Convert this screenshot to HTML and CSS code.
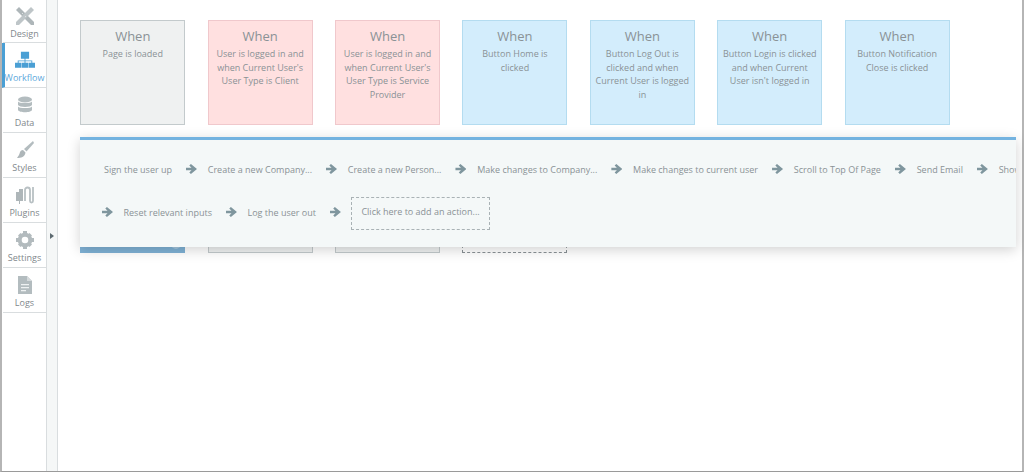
FILE: index.html
```html
<!DOCTYPE html>
<html lang="en">
  <head>
    <meta charset="UTF-8" />
    <title>Workflow</title>
    <link rel="stylesheet" href="styles.css">
  </head>
  <body>
    <div class="app">
      <nav class="sidebar">
        <a class="tab">
          <svg class="tab-icon" viewBox="0 0 20 20"><path d="M1 4 4 1l15 15v3h-3z" fill="#aeb6b9"/><path d="M19 4l-3-3L1 16l0 3h3z" fill="#bec5c8"/><path d="M7 8l1-1M10 11l1-1" stroke="#dfe3e4" stroke-width="1"/></svg>
          Design
        </a>
        <a class="tab active">
          <svg class="tab-icon" viewBox="0 0 22 20"><path d="M6.500 1h9v7.500h-9zM10.500 8.500h1v2h7.500V13h-1v-1.500h-6.500V13h-1v-1.500H4V13H3v-2.500h7.500zM0 13h7v5.500H0zM7.500 13h7v5.500h-7zM15 13h7v5.500h-7z" fill="#4a9fd4"/></svg>
          Workflow
        </a>
        <a class="tab">
          <svg class="tab-icon" viewBox="0 0 20 20"><ellipse cx="10" cy="4.500" rx="7" ry="3" fill="#b3bcbf"/><path d="M3 6.500c1 2 13 2 14 0v3.500c-1 2.500-13 2.500-14 0zM3 11.500c1 2 13 2 14 0V15c-1 3-13 3-14 0z" fill="#b3bcbf"/></svg>
          Data
        </a>
        <a class="tab">
          <svg class="tab-icon" viewBox="0 0 20 20"><path d="M18 1 9 9l2.500 2.500L19 3z" fill="#b3bcbf"/><path d="M8 10c-3 0-3 3-4 5l-2 3c4 0 8-1 8.500-5.500z" fill="#aeb6b9"/></svg>
          Styles
        </a>
        <a class="tab">
          <svg class="tab-icon" viewBox="0 0 20 20"><path d="M1 7h3V4h4v12H5v3H4v-3H1z" fill="#aeb6b9"/><path d="M10 16V5a2.500 2.500 0 0 1 5 0v11a1.500 1.500 0 0 0 3 0V2" fill="none" stroke="#b9c1c4" stroke-width="1.800"/></svg>
          Plugins
        </a>
        <a class="tab">
          <svg class="tab-icon" viewBox="0 0 20 20"><circle cx="10" cy="10" r="5.300" fill="none" stroke="#b3bbbe" stroke-width="4"/><path d="M8 1h4v3H8zM8 16h4v3H8zM1 8h3v4H1zM16 8h3v4h-3zM3 5.500 5.500 3l2 2L5 7.500zM14.500 3 17 5.500l-2 2L12.500 5zM3 14.500 5.500 17l2-2L5 12.500zM17 14.500 14.500 17l-2-2 2.500-2.500z" fill="#b3bbbe"/></svg>
          Settings
        </a>
        <a class="tab">
          <svg class="tab-icon" viewBox="0 0 20 20"><path d="M3 1h9l5 5v13H3z" fill="#b3bcbf"/><path d="M12 1v5h5z" fill="#d5dadc"/><path d="M6 9h8v1.300H6zM6 12h8v1.300H6zM6 15h5v1.300H6z" fill="#eef1f2"/></svg>
          Logs
        </a>
      </nav>

      <div class="rail"><span class="rail-arrow"></span></div>

      <main class="canvas">
        <div class="cards">
          <div class="card gray"><h3>When</h3><p>Page is loaded</p></div>
          <div class="card red"><h3>When</h3><p>User is logged in and when Current User's User Type is Client</p></div>
          <div class="card red"><h3>When</h3><p>User is logged in and when Current User's User Type is Service Provider</p></div>
          <div class="card blue"><h3>When</h3><p>Button Home is clicked</p></div>
          <div class="card blue"><h3>When</h3><p>Button Log Out is clicked and when Current User is logged in</p></div>
          <div class="card blue"><h3>When</h3><p>Button Login is clicked and when Current User isn't logged in</p></div>
          <div class="card blue"><h3>When</h3><p>Button Notification Close is clicked</p></div>
        </div>

        <div class="cards under">
          <div class="card solid"></div>
          <div class="card gray"></div>
          <div class="card gray"></div>
          <div class="card dashed"></div>
        </div>

        <section class="actions">
          <div class="action-row">
            <span class="action">Sign the user up</span>
            <span class="arrow"></span>
            <span class="action">Create a new Company...</span>
            <span class="arrow"></span>
            <span class="action">Create a new Person...</span>
            <span class="arrow"></span>
            <span class="action">Make changes to Company...</span>
            <span class="arrow"></span>
            <span class="action">Make changes to current user</span>
            <span class="arrow"></span>
            <span class="action">Scroll to Top Of Page</span>
            <span class="arrow"></span>
            <span class="action">Send Email</span>
            <span class="arrow"></span>
            <span class="action">Show</span>
          </div>
          <div class="action-row second">
            <span class="arrow"></span>
            <span class="action">Reset relevant inputs</span>
            <span class="arrow"></span>
            <span class="action">Log the user out</span>
            <span class="arrow"></span>
            <span class="action add">Click here to add an action...</span>
          </div>
        </section>
      </main>
    </div>
  </body>
</html>
```
FILE: styles.css
```css
* {
  box-sizing: border-box;
}

html,
body {
  height: 100%;
}

body {
  margin: 0;
  background-color: #fff;
  font-family: "Open Sans", sans-serif;
  color: #8a9296;
  overflow: hidden;
}

.app {
  display: flex;
  height: 472px;
  border-left: 2px solid #b5b5b5;
  border-right: 2px solid #b5b5b5;
  border-bottom: 1px solid #9a9a9a;
}

.sidebar {
  width: 45px;
  padding-left: 1px;
  flex-shrink: 0;
  border-right: 1px solid #d9dddf;
}

.tab {
  display: flex;
  flex-direction: column;
  align-items: center;
  height: 45px;
  padding-top: 7px;
  border-bottom: 1px solid #d9dddf;
  font-size: 9px;
  line-height: 12px;
  color: #7f888c;
}

.tab:first-child {
  height: 43px;
  padding-top: 6px;
}

.tab-icon {
  width: 20px;
  height: 20px;
  margin-bottom: 2px;
}

.tab.active {
  margin-left: -1px;
  padding-right: 2px;
  border-left: 3px solid #4a9fd4;
  color: #5ea9dc;
}

.rail {
  width: 11px;
  flex-shrink: 0;
  display: flex;
  align-items: center;
  justify-content: center;
  background-color: #f5f7f7;
  border-right: 1px solid #d9dddf;
}

.rail-arrow {
  width: 0;
  height: 0;
  border-left: 4px solid #5d6a70;
  border-top: 3px solid transparent;
  border-bottom: 3px solid transparent;
}

.canvas {
  position: relative;
  flex: 1;
  min-width: 0;
  padding: 20px 0 0 22.25px;
}

.cards {
  display: flex;
  gap: 22.4px;
}

.under {
  margin-top: 23px;
}

.card {
  position: relative;
  width: 105px;
  height: 105px;
  flex-shrink: 0;
  padding: 0 4px;
  border: 1px solid;
  text-align: center;
}

.card h3 {
  margin: 0;
  padding-top: 6px;
  font-size: 13px;
  line-height: 18px;
  font-weight: 400;
}

.card p {
  margin: 2px 0 0;
  font-size: 9px;
  line-height: 13.5px;
}

.gray {
  background-color: #eff1f1;
  border-color: #c3cacc;
}

.red {
  background-color: #ffe0e0;
  border-color: #f0c8cc;
}

.blue {
  background-color: #d3edfc;
  border-color: #b4dcf0;
}

.solid {
  background-color: #7fb2d6;
  border-color: #7fb2d6;
}

/* corner icon of the hidden card, only its edge shows under the panel */
.solid::after {
  content: "";
  position: absolute;
  right: 3px;
  top: 90px;
  width: 10px;
  height: 10px;
  border-radius: 50%;
  background-color: #a5c8e0;
}

.dashed {
  border: 1px dashed #8a9296;
}

.actions {
  position: absolute;
  left: 22px;
  top: 137px;
  width: 936px;
  height: 110px;
  padding: 19px 0 0 24px;
  overflow: hidden;
  background-color: #f4f8f8;
  border-top: 3px solid #74b3e0;
  box-shadow: 0 3px 12px rgba(0, 0, 0, 0.18);
}

.action-row {
  display: flex;
  align-items: center;
  height: 20px;
  white-space: nowrap;
  font-size: 9px;
}

.second {
  height: 36px;
  margin-top: 15px;
  margin-left: -16px;
}

.action {
  flex-shrink: 0;
}

.add {
  height: 33px;
  margin-top: 3px;
  padding: 0 9px;
  line-height: 28px;
  border: 1px dashed #a9b2b5;
}

.arrow {
  flex-shrink: 0;
  width: 11px;
  height: 10px;
  margin: 0 10.75px 0 14px;
  background-color: #7f969e;
  clip-path: polygon(45% 0, 100% 50%, 45% 100%, 30% 85%, 50% 62%, 0 62%, 0 38%, 50% 38%, 30% 15%);
}

.second .arrow {
  margin-right: 10.5px;
}
```
